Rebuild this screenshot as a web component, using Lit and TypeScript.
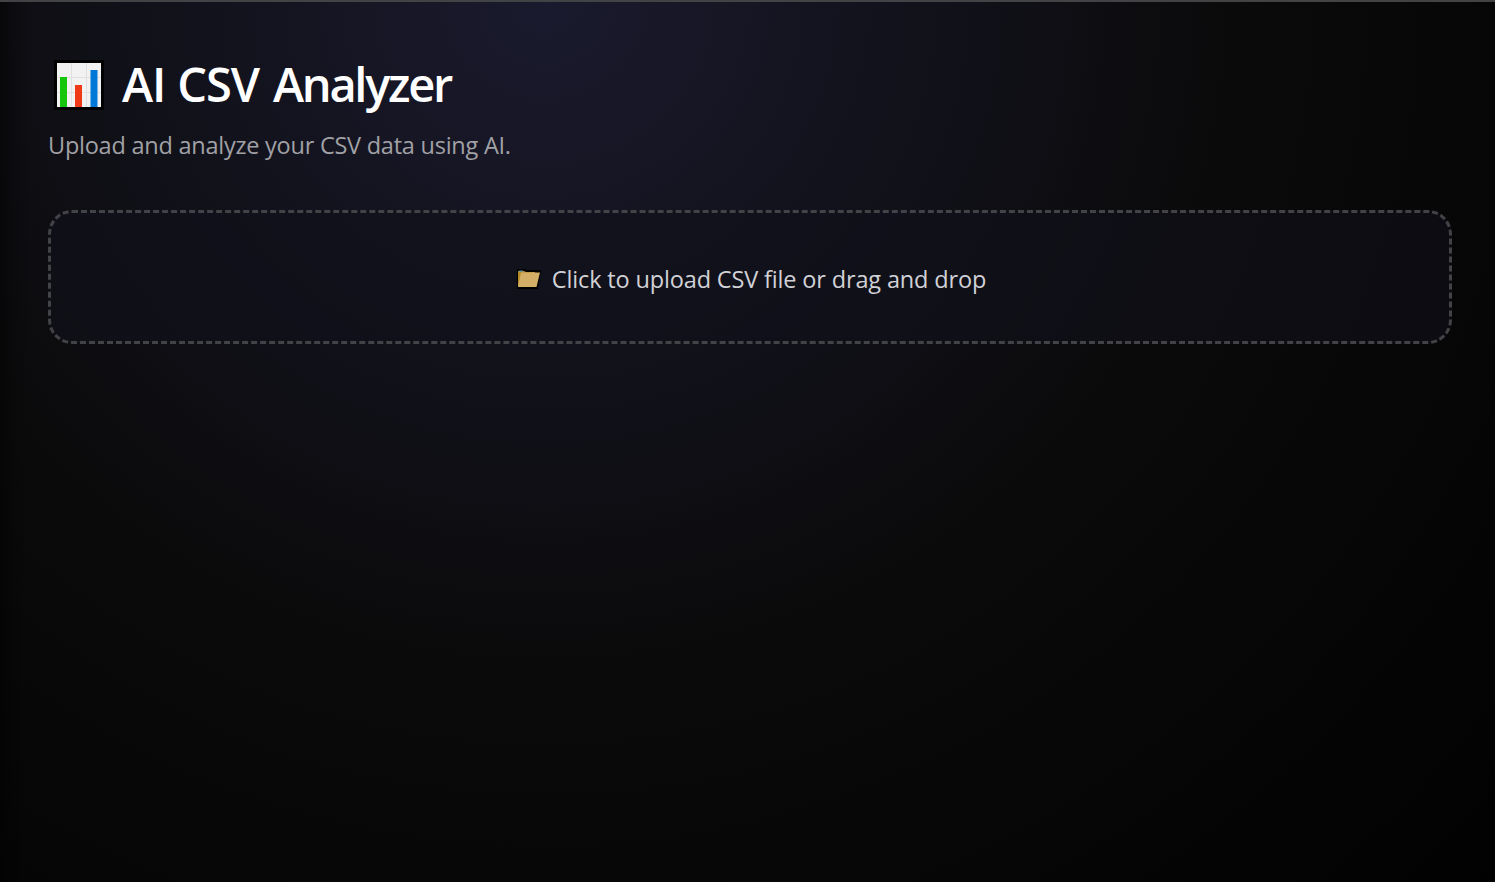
import { LitElement, html, css } from "lit";
import { customElement } from "lit/decorators.js";

@customElement("app-root")
export class AppRoot extends LitElement {
  static styles = css`
    :host {
      display: block;
      font-family: "Segoe UI", "Open Sans", "Noto Sans", sans-serif;
    }
    .page {
      box-sizing: border-box;
      height: 882px;
      overflow: hidden;
      border-top: 2px solid #424344;
      padding: 47px 43px 0 48px;
      background:
        linear-gradient(to right, rgba(0, 0, 0, 0.45), rgba(0, 0, 0, 0.15) 14px, transparent 30px),
        radial-gradient(1420px 1370px at 545px 0, #1a1a2e, #0a0a0a 50%, #000);
    }
    .title {
      display: flex;
      align-items: center;
      gap: 17px;
      height: 70px;
      margin: 0;
      color: #fff;
      font-size: 47px;
      font-weight: 600;
      letter-spacing: -1.1px;
      word-spacing: 1px;
      line-height: 70px;
      white-space: nowrap;
    }
    .noun {
      letter-spacing: -2.3px;
      margin-left: 2px;
    }
    .chart {
      width: 52px;
      height: 52px;
      margin: 2px 0 0 5px;
      flex: none;
    }
    .subtitle {
      margin: 10px 0 0;
      height: 32px;
      line-height: 32px;
      font-size: 23.5px;
      letter-spacing: -0.24px;
      color: #a1a1a6;
      white-space: nowrap;
    }
    .upload {
      box-sizing: border-box;
      display: flex;
      align-items: center;
      justify-content: center;
      gap: 11px;
      height: 134px;
      margin-top: 49px;
      padding: 3px 0 0 2px;
      border: 3px dashed #434347;
      border-radius: 24px;
      background: rgba(16, 16, 26, 0.6);
      color: #d1d1d6;
      font-size: 23.5px;
      letter-spacing: -0.15px;
      line-height: 32px;
      white-space: nowrap;
      cursor: pointer;
    }
    .folder {
      width: 25px;
      height: 20px;
      flex: none;
    }
  `;

  render() {
    return html`
      <main class="page">
        <h1 class="title">
          <svg class="chart" viewBox="0 0 52 52">
            <path fill="#000" d="M1 1h50v50H1z" />
            <path fill="#f2f2f2" d="M4 4h44v44H4z" />
            <path stroke="#e0e0e0" d="M18.500 4v44M33.500 4v44M4 18.500h44M4 33.500h44" />
            <path fill="#16c60c" d="M7 18h7v30H7z" />
            <path fill="#f03a17" d="M22 26h7v22h-7z" />
            <path fill="#0078d7" d="M37.500 11h7v37h-7z" />
          </svg>
          <span>AI CSV <span class="noun">Analyzer</span></span>
        </h1>
        <p class="subtitle">Upload and analyze your CSV data using AI.</p>
        <section class="upload">
          <svg class="folder" viewBox="0 0 25 20">
            <path fill="#000" d="M1 0h8l2 1h14l-3 19H1z" />
            <path fill="#b88b28" d="M2 2h6l2 1h9v14H2z" />
            <path fill="#6b9998" d="M3 1.500h4v1.500H3z" />
            <path fill="#d2ae66" d="M5 3.500H24l-3.500 14.500H2z" />
          </svg>
          <span class="label">Click to upload CSV file or drag and drop</span>
        </section>
      </main>
    `;
  }
}
